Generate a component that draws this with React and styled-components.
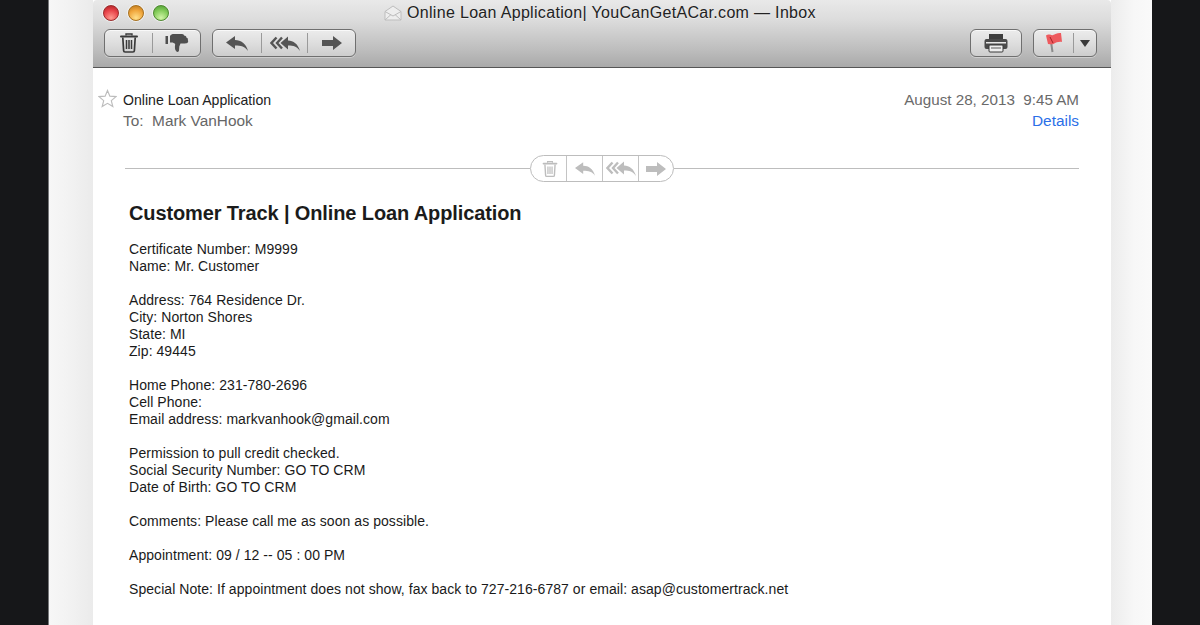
import React from "react";
import styled, { createGlobalStyle } from "styled-components";

const Global = createGlobalStyle`
  html, body { margin: 0; padding: 0; height: 100%; background: #161719; overflow: hidden; }
  * { box-sizing: border-box; }
`;
const Page = styled.div`
  width: 1200px; height: 625px; overflow: hidden; display: flex;
  padding: 0 48px; background: #161719;
  font-family: "Liberation Sans", Arial, sans-serif;
`;
const Backdrop = styled.div`
  flex: 1; display: flex; padding: 0 41px 0 44px;
  border-left: 1px solid #77787a;
  background: linear-gradient(90deg, #f7f7f7 0, #f3f3f3 17px, #ebebeb 44px, #ebebeb 44px, #fff 44px, #fff 1062px, #ececec 1062px, #f7f7f7 1085px, #fafafa 1104px);
`;
const Win = styled.div`
  flex: 1; min-width: 0; height: 625px; background: #fff; overflow: hidden;
`;
const Chrome = styled.div`
  height: 68px; padding: 4px 14px 0 11px; position: relative;
  background: linear-gradient(180deg, #e9e9e9 0, #dcdcdc 20px, #bdbdbd 50px, #a9a9a9 67px);
  border-bottom: 1px solid #555;
  border-radius: 4px 4px 0 0;
`;
const TitleRow = styled.div`
  height: 17px; display: flex; align-items: center; position: relative;
`;
const Lights = styled.div`display: flex; gap: 9px; margin: 1px 0 0 -1px;`;
const Light = styled.div`
  width: 16px; height: 16px; border-radius: 50%;
  border: 1px solid ${p => p.$edge};
  box-shadow: 0 0 0 1px rgba(255,255,255,.55);
  background: radial-gradient(circle at 50% 85%, ${p => p.$low} 0, ${p => p.$mid} 55%, ${p => p.$high} 100%);
`;
const WinTitle = styled.div`
  flex: 1; display: flex; align-items: center; justify-content: flex-start; gap: 5px;
  margin-left: 215px; font-size: 16px; color: #222; letter-spacing: .32px; white-space: nowrap;
  text-shadow: 0 1px 0 rgba(255,255,255,.5); margin-top: 1px;
`;
const Toolbar = styled.div`
  display: flex; align-items: center; gap: 11px; margin-top: 8px;
`;
const Spacer = styled.div`flex: 1;`;
const Group = styled.div`
  display: flex; align-items: center; height: 28px; width: ${p => p.$w}px;
  border: 1px solid #6f6f6f; border-radius: 6px;
  background: linear-gradient(180deg, #ececec 0, #dedede 50%, #cdcdcd 100%);
  box-shadow: inset 0 1px 0 rgba(255,255,255,.7), 0 1px 0 rgba(255,255,255,.35);
`;
const Seg = styled.div`
  flex: ${p => p.$w ? `0 0 ${p.$w}px` : 1}; height: 20px; display: flex; align-items: center; justify-content: center;
  & + & { border-left: 1px solid #9a9a9a; }
`;
const Meta = styled.div`
  display: flex; padding: 22px 32px 0 5px; gap: 6px;
`;
const StarBox = styled.div`width: 19px; height: 20px; flex: none; margin-top: -1px;`;
const MetaCol = styled.div`flex: 1;`;
const MetaRow = styled.div`
  display: flex; justify-content: space-between; height: 20px; line-height: ${p => p.$lh || 20}px; white-space: nowrap;
`;
const Subject = styled.span`font-size: 14.1px; color: #222;`;
const Recipient = styled.span`font-size: 15.4px; color: #666; white-space: pre;`;
const Stamp = styled.span`font-size: 15.2px; color: #6a6a6a; white-space: pre;`;
const DetailsLink = styled.a`font-size: 15.4px; color: #2b6fe8; text-decoration: none;`;
const DividerRow = styled.div`
  display: flex; align-items: center; margin: 25px 32px 0; height: 27px;
  &::before, &::after { content: ""; flex: 1; height: 1px; background: #bdbdbd; }
`;
const Pill = styled.div`
  display: flex; width: 144px; height: 27px; border: 1px solid #bdbdbd; border-radius: 14px; background: #fff; overflow: hidden;
`;
const PillSeg = styled.div`
  flex: 0 0 ${p => p.$w}px; display: flex; align-items: center; justify-content: center; padding-left: ${p => p.$pl || 0}px;
  & + & { border-left: 1px solid #c4c4c4; }
`;
const Body = styled.div`padding: 19px 0 0 36px; color: #1a1a1a;`;
const Heading = styled.h1`
  margin: 0 0 16px; font-size: 20px; line-height: 24px; font-weight: 700; color: #1b1b1b; letter-spacing: -.12px;
`;
const Para = styled.div`margin-bottom: 17px;`;
const Line = styled.div`font-size: 14px; line-height: 17px; height: 17px; white-space: nowrap; letter-spacing: .06px;`;

const Trash = ({ c = "#3a3a3a", s = 22 }) => (
  <svg width={s} height={s} viewBox="0 0 22 22" fill="none">
    <path d="M8 3.500V2h6v1.500" stroke={c} strokeWidth="1.400" />
    <path d="M3 4.500h16" stroke={c} strokeWidth="2" strokeLinecap="round" />
    <path d="M4.800 5.500l.8 13c0 1 .7 1.500 1.500 1.500h7.800c.8 0 1.500-.5 1.500-1.500l.8-13" stroke={c} strokeWidth="1.700" fill="none" />
    <path d="M8.500 8v9M11 8v9M13.500 8v9" stroke={c} strokeWidth="1.500" />
  </svg>
);
const Thumb = () => (
  <svg width="24" height="21" viewBox="0 0 24 21" fill="#4f4f4f">
    <rect x="0.500" y="3" width="2.500" height="8" />
    <path d="M5 3c1-1.500 2-2 4-2h8c1.500 0 2 1 2 1.500 1.800 0 2.500 1 2.300 2 1.500.5 1.900 1.500 1.500 2.500.6.800.5 2-.3 2.800-.8.700-2 .7-3.500.7h-3.500l-1.200 3-.3 4c-.2 1.800-2 1.700-3 .5-1.200-1.500-1.300-4-.8-6.500-.3-1-1.200-1.500-2.500-2L5 9.500z" />
  </svg>
);
const Reply = ({ c = "#555", w = 22, h = 15 }) => (
  <svg width={w} height={h} viewBox="0 0 22 15" fill={c}>
    <path d="M0 6.500 9 0v4c6 0 11 3.500 13 11-3-4.500-7-5.500-13-5.500V13z" />
  </svg>
);
const ReplyAll = ({ c = "#555" }) => (
  <svg width="30" height="15" viewBox="0 0 30 15" fill="none">
    <path d="M6.500 1.500 1.500 7l5 5.500M12 1.500 7 7l5 5.500" stroke={c} strokeWidth="2.400" />
    <path d="M10.500 7 18 .5v4c5.500 0 10 3.500 12 10.500-3-4.500-6.500-5.500-12-5.500v4z" fill={c} />
  </svg>
);
const Forward = ({ c = "#555" }) => (
  <svg width="20" height="14" viewBox="0 0 20 14" fill={c}>
    <path d="M20 7 11 0v4H0v6h11v4z" />
  </svg>
);
const Printer = () => (
  <svg width="24" height="20" viewBox="0 0 24 20">
    <rect x="5" y="1" width="14" height="5" fill="#3d3d3d" />
    <path d="M2.500 6h19a2 2 0 0 1 2 2v6a2 2 0 0 1-2 2H2.500a2 2 0 0 1-2-2V8a2 2 0 0 1 2-2z" fill="#4a4a4a" />
    <rect x="2" y="9" width="20" height="1.500" fill="#e8e8e8" />
    <rect x="5" y="12" width="14" height="7" rx="1" fill="#eee" stroke="#3a3a3a" />
    <path d="M7 15h10" stroke="#555" />
  </svg>
);
const FlagIcon = () => (
  <svg width="18" height="22" viewBox="0 0 18 22">
    <path d="M5 3l2.500 17" stroke="#8a8a8a" strokeWidth="2" />
    <path d="M1 3.500C4 1 6 4 8 3c2-1 5-2.500 8-2l1 9c-3-.5-6 .5-8.500 2-2 .8-3.500 0-5.500 0z" fill="#ee5a5e" />
    <path d="M5 5l3 6" stroke="#a32024" />
  </svg>
);
const Caret = () => (
  <svg width="10" height="7" viewBox="0 0 10 7"><path d="M0 0h10L5 7z" fill="#3a3a3a" /></svg>
);
const Envelope = () => (
  <svg width="18" height="16" viewBox="0 0 18 16" fill="#eee" stroke="#bdbdbd">
    <path d="M1 6.500 9 1l8 5.500V15H1z" />
    <path d="M1 6.500 9 11l8-4.500M1 15l6-5.500M17 15l-6-5.500" fill="none" />
  </svg>
);
const Star = () => (
  <svg width="19" height="19" viewBox="0 0 20 20" fill="#fff" stroke="#bcbcbc" strokeWidth="1.200">
    <path d="M10 1.500l2.500 6 6.500.5-5 4.200 1.600 6.300L10 15.100 4.400 18.500 6 12.200 1 8l6.500-.5z" />
  </svg>
);

const paragraphs = [
  ["Certificate Number: M9999", "Name: Mr. Customer"],
  ["Address: 764 Residence Dr.", "City: Norton Shores", "State: MI", "Zip: 49445"],
  ["Home Phone: 231-780-2696", "Cell Phone:", "Email address: markvanhook@gmail.com"],
  ["Permission to pull credit checked.", "Social Security Number: GO TO CRM", "Date of Birth: GO TO CRM"],
  ["Comments: Please call me as soon as possible."],
  ["Appointment: 09 / 12 -- 05 : 00 PM"],
  ["Special Note: If appointment does not show, fax back to 727-216-6787 or email: asap@customertrack.net"],
];

export default function App() {
  return (
    <Page>
      <Global />
      <Backdrop>
        <Win>
          <Chrome>
            <TitleRow>
              <Lights>
                <Light $edge="#9c2b2b" $low="#ff9a90" $mid="#e8444a" $high="#a81c20" />
                <Light $edge="#a8701c" $low="#ffe08a" $mid="#f0a63c" $high="#b8741a" />
                <Light $edge="#4f8a30" $low="#d2f5a8" $mid="#84cc5a" $high="#4a9a30" />
              </Lights>
              <WinTitle><Envelope />Online Loan Application| YouCanGetACar.com — Inbox</WinTitle>
            </TitleRow>
            <Toolbar>
              <Group $w={97}>
                <Seg $w={47}><Trash /></Seg>
                <Seg><Thumb /></Seg>
              </Group>
              <Group $w={144}>
                <Seg $w={48}><Reply /></Seg>
                <Seg $w={46}><ReplyAll /></Seg>
                <Seg><Forward /></Seg>
              </Group>
              <Spacer />
              <Group $w={52}><Seg><Printer /></Seg></Group>
              <Group $w={64}>
                <Seg $w={39}><FlagIcon /></Seg>
                <Seg><Caret /></Seg>
              </Group>
            </Toolbar>
          </Chrome>
          <Meta>
            <StarBox><Star /></StarBox>
            <MetaCol>
              <MetaRow>
                <Subject>Online Loan Application</Subject>
                <Stamp>August 28, 2013  9:45 AM</Stamp>
              </MetaRow>
              <MetaRow $lh={22}>
                <Recipient>To:  Mark VanHook</Recipient>
                <DetailsLink>Details</DetailsLink>
              </MetaRow>
            </MetaCol>
          </Meta>
          <DividerRow>
            <Pill>
              <PillSeg $w={35} $pl={3}><Trash c="#bdbdbd" s={18} /></PillSeg>
              <PillSeg $w={36}><Reply c="#bdbdbd" w={20} h={14} /></PillSeg>
              <PillSeg $w={36}><ReplyAll c="#bdbdbd" /></PillSeg>
              <PillSeg $w={35}><Forward c="#bdbdbd" /></PillSeg>
            </Pill>
          </DividerRow>
          <Body>
            <Heading>Customer Track | Online Loan Application</Heading>
            {paragraphs.map((p, i) => (
              <Para key={i}>{p.map(l => <Line key={l}>{l}</Line>)}</Para>
            ))}
          </Body>
        </Win>
      </Backdrop>
    </Page>
  );
}
